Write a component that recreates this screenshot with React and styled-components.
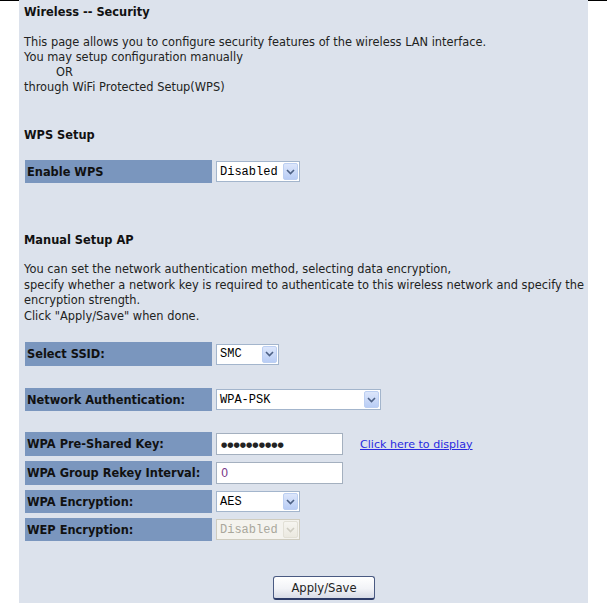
import React from "react";
import styled, { createGlobalStyle } from "styled-components";

const GlobalStyle = createGlobalStyle`
  html, body {
    margin: 0;
    padding: 0;
    background: #fff;
  }
  body {
    font-family: "DejaVu Sans", sans-serif;
    font-size: 11.4px;
    color: #222;
  }
`;

const Page = styled.div`
  display: grid;
  grid-template-columns: 19px 569px 1fr;
  min-height: 603px;
`;

const Edge = styled.div`
  border-top: 1px solid ${(p) => (p.line ? "#000" : "transparent")};
`;

const Panel = styled.div`
  background: #dce2ec;
  padding: 5px 0 0 5px;
  min-height: 598px;
`;

const Title = styled.div`
  font-weight: bold;
  line-height: 15px;
  color: #111;
`;

const Heading = styled.div`
  font-weight: bold;
  line-height: 15px;
  color: #111;
  margin-top: ${(p) => p.top}px;
`;

const Text = styled.div`
  line-height: ${(p) => p.lh || 15}px;
  margin-top: ${(p) => p.top}px;
  white-space: nowrap;
`;

const Indent = styled.span`
  padding-left: 32px;
`;

const Form = styled.div`
  display: flex;
  flex-direction: column;
  gap: ${(p) => p.gap || 0}px;
  margin-top: ${(p) => p.top}px;
  margin-left: 1px;
`;

const Row = styled.div`
  display: grid;
  grid-template-columns: 187px auto;
  column-gap: 4px;
  align-items: center;
`;

const Label = styled.div`
  background: #7a96be;
  height: ${(p) => p.h || 24}px;
  display: flex;
  align-items: center;
  padding-left: 2px;
  font-weight: bold;
  color: #111;
  white-space: nowrap;
`;

const Control = styled.div`
  display: flex;
  align-items: center;
  gap: 17px;
`;

const SelectBox = styled.div`
  width: ${(p) => p.w}px;
  height: 21px;
  box-sizing: border-box;
  border: 1px solid ${(p) => (p.disabled ? "#cfccbf" : "#a3b5cc")};
  background: ${(p) => (p.disabled ? "#f4f3ee" : "#fff")};
  display: flex;
  align-items: center;
  justify-content: space-between;
  padding: 0 1px 0 3px;
`;

const SelectText = styled.span`
  font-family: "Liberation Mono", monospace;
  font-size: 12px;
  color: ${(p) => (p.disabled ? "#a9a79c" : "#000")};
`;

const Arrow = styled.span`
  width: 15px;
  height: 17px;
  box-sizing: border-box;
  border-radius: 2px;
  display: flex;
  align-items: center;
  justify-content: center;
  background: ${(p) =>
    p.disabled
      ? "linear-gradient(#f6f5f0, #ebe9e0)"
      : "linear-gradient(#dce6fb, #b9cdf5)"};
  border: 1px solid ${(p) => (p.disabled ? "#e2e0d6" : "#bccff2")};
`;

const Input = styled.div`
  width: 127px;
  height: 22px;
  box-sizing: border-box;
  border: 1px solid #a4b0bf;
  background: #fff;
  display: flex;
  align-items: center;
  padding-left: 4px;
  font-size: ${(p) => p.fs || 11.4}px;
  color: ${(p) => p.color || "#333"};
  letter-spacing: ${(p) => p.ls || 0}px;
`;

const Link = styled.a`
  color: #2a2ae0;
  text-decoration: underline;
  font-size: 11.1px;
  cursor: pointer;
`;

const ButtonRow = styled.div`
  margin-top: 35px;
  padding-left: 249px;
`;

const Button = styled.button`
  width: 102px;
  height: 24px;
  font-family: "DejaVu Sans", sans-serif;
  font-size: 11.6px;
  color: #222;
  border: 1px solid #4a5a82;
  border-bottom: 2px solid #2c3a66;
  border-radius: 3px;
  background: linear-gradient(#ffffff, #f2f3f7 55%, #d7dbe6);
`;

const Chevron = ({ disabled }) => (
  <svg width="9" height="6" viewBox="0 0 9 6">
    <path
      d="M1 1 L4.5 4.5 L8 1"
      fill="none"
      stroke={disabled ? "#cfcdc2" : "#4d6185"}
      strokeWidth="1.6"
    />
  </svg>
);

const Select = ({ w, value, disabled }) => (
  <SelectBox w={w} disabled={disabled}>
    <SelectText disabled={disabled}>{value}</SelectText>
    <Arrow disabled={disabled}>
      <Chevron disabled={disabled} />
    </Arrow>
  </SelectBox>
);

export default function App() {
  return (
    <>
      <GlobalStyle />
      <Page>
        <Edge line />
        <Panel>
          <Title>Wireless -- Security</Title>
          <Text top={15}>
            This page allows you to configure security features of the wireless LAN interface.
            <br />
            You may setup configuration manually
            <br />
            <Indent>OR</Indent>
            <br />
            through WiFi Protected Setup(WPS)
          </Text>

          <Heading top={33}>WPS Setup</Heading>
          <Form top={17}>
            <Row>
              <Label h={23}>Enable WPS</Label>
              <Control>
                <Select w={84} value="Disabled" />
              </Control>
            </Row>
          </Form>

          <Heading top={50}>Manual Setup AP</Heading>
          <Text top={14} lh={15.5}>
            You can set the network authentication method, selecting data encryption,
            <br />
            specify whether a network key is required to authenticate to this wireless network and specify the
            <br />
            encryption strength.
            <br />
            Click "Apply/Save" when done.
          </Text>

          <Form top={18}>
            <Row>
              <Label>Select SSID:</Label>
              <Control>
                <Select w={63} value="SMC" />
              </Control>
            </Row>
          </Form>

          <Form top={22}>
            <Row>
              <Label h={23}>Network Authentication:</Label>
              <Control>
                <Select w={165} value="WPA-PSK" />
              </Control>
            </Row>
          </Form>

          <Form top={21} gap={5}>
            <Row>
              <Label>WPA Pre-Shared Key:</Label>
              <Control>
                <Input fs={7.2} color="#222">●●●●●●●●●●</Input>
                <Link>Click here to display</Link>
              </Control>
            </Row>
            <Row>
              <Label>WPA Group Rekey Interval:</Label>
              <Control>
                <Input color="#7a3a8a">0</Input>
              </Control>
            </Row>
            <Row>
              <Label h={23}>WPA Encryption:</Label>
              <Control>
                <Select w={84} value="AES" />
              </Control>
            </Row>
            <Row>
              <Label h={23}>WEP Encryption:</Label>
              <Control>
                <Select w={84} value="Disabled" disabled />
              </Control>
            </Row>
          </Form>

          <ButtonRow>
            <Button>Apply/Save</Button>
          </ButtonRow>
        </Panel>
        <Edge line />
      </Page>
    </>
  );
}
